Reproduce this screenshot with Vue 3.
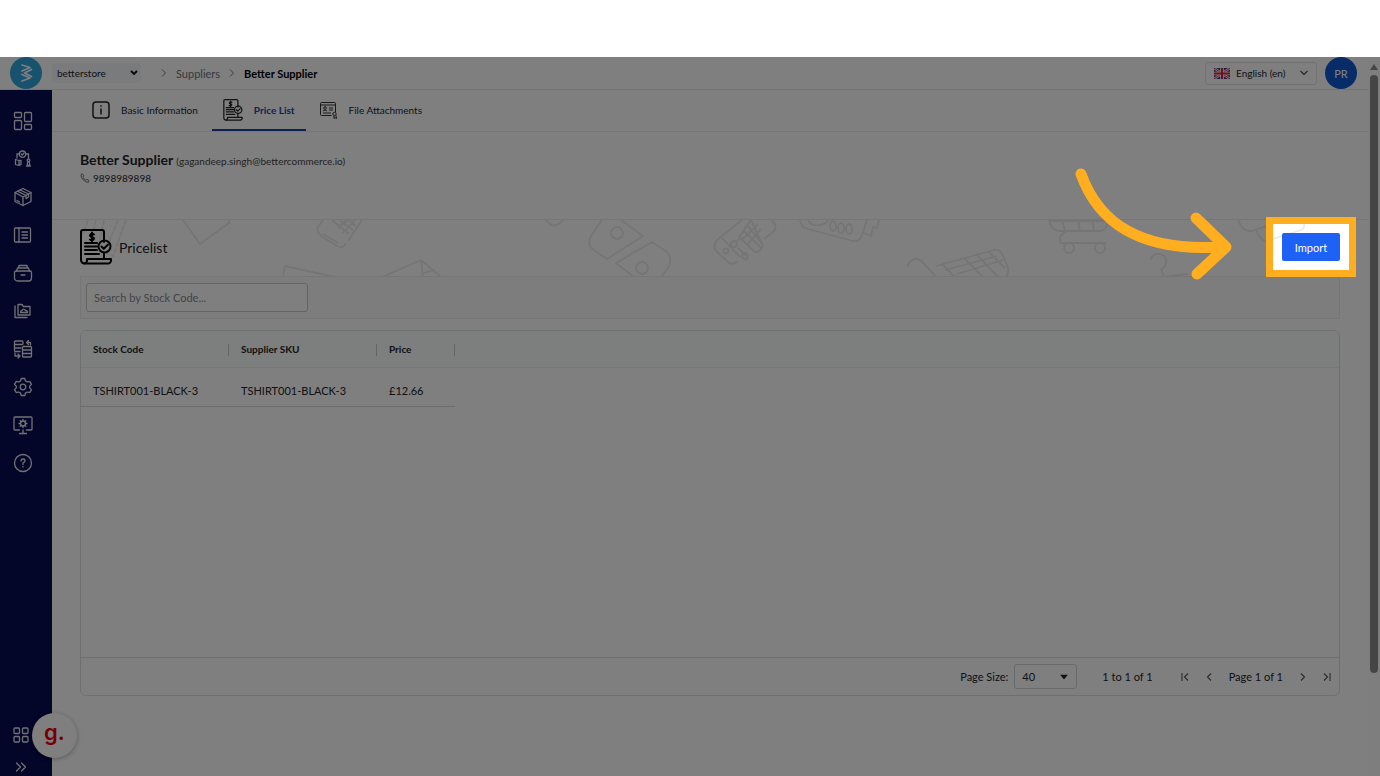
<template>
  <div class="page">
    <div class="stage">
      <div class="app">
        <header class="topbar">
          <a href="#" class="logo" aria-label="Home">
            <svg width="32" height="32" viewBox="0 0 32 32">
              <circle cx="16" cy="16" r="16" fill="#2ea6dc" />
              <g fill="none" stroke="#fff" stroke-width="1.7" stroke-linejoin="round" stroke-linecap="round">
                <path d="M12 8l8 2.500-8 3.500" />
                <path d="M21.500 12.500l-7 3.500 7 3.500" />
                <path d="M12 17.500l8 3.500-8 3" />
              </g>
            </svg>
          </a>
          <div class="store">
            <select v-model="store" aria-label="Store">
              <option>betterstore</option>
            </select>
            <svg class="caret" width="8" height="6" viewBox="0 0 8 6"><path d="M1 1l3 3 3-3" fill="none" stroke="#000" stroke-width="1.8" /></svg>
          </div>
          <nav class="crumbs">
            <svg width="6" height="8" viewBox="0 0 6 8"><path d="M1 .5L4.5 4 1 7.5" /></svg>
            <a href="#">Suppliers</a>
            <svg width="6" height="8" viewBox="0 0 6 8"><path d="M1 .5L4.5 4 1 7.5" /></svg>
            <strong>Better Supplier</strong>
          </nav>
          <div class="lang">
            <svg class="flag" width="16" height="11" viewBox="0 0 16 11">
              <rect width="16" height="11" fill="#2b3f9b" />
              <path d="M0 0l16 11M16 0L0 11" stroke="#fff" stroke-width="2.4" />
              <path d="M0 0l16 11M16 0L0 11" stroke="#e0203a" stroke-width="1" />
              <path d="M8 0v11M0 5.5h16" stroke="#fff" stroke-width="3.6" />
              <path d="M8 0v11M0 5.5h16" stroke="#e0203a" stroke-width="2" />
            </svg>
            <select v-model="lang" aria-label="Language">
              <option>English (en)</option>
            </select>
            <svg class="caret" width="8" height="6" viewBox="0 0 8 6"><path d="M.5 1L4 4.5 7.5 1" fill="none" stroke="#444" stroke-width="1.1" /></svg>
          </div>
          <button class="avatar">PR</button>
        </header>

        <div class="body">
          <aside class="sidebar">
            <button v-for="item in menu" :key="item.name" class="side-btn" :aria-label="item.name">
              <svg width="20" height="20" viewBox="0 0 20 20"><path v-for="d in item.paths" :key="d" :d="d" /></svg>
            </button>
            <div class="side-bottom">
              <button class="side-btn apps" aria-label="Apps">
                <svg width="20" height="20" viewBox="0 0 20 20"><path d="M4 3h3.500a1 1 0 0 1 1 1v3.500a1 1 0 0 1-1 1H4a1 1 0 0 1-1-1V4a1 1 0 0 1 1-1zM12.500 3H16a1 1 0 0 1 1 1v3.500a1 1 0 0 1-1 1h-3.500a1 1 0 0 1-1-1V4a1 1 0 0 1 1-1zM4 11.500h3.500a1 1 0 0 1 1 1V16a1 1 0 0 1-1 1H4a1 1 0 0 1-1-1v-3.500a1 1 0 0 1 1-1zM12.500 11.500H16a1 1 0 0 1 1 1V16a1 1 0 0 1-1 1h-3.500a1 1 0 0 1-1-1v-3.500a1 1 0 0 1 1-1z" /></svg>
              </button>
              <button class="side-btn expand" aria-label="Expand">
                <svg width="20" height="20" viewBox="0 0 20 20"><path d="M5.500 6l4 4-4 4M10.500 6l4 4-4 4" /></svg>
              </button>
            </div>
            <button class="guide">g.</button>
          </aside>

          <main class="content">
            <nav class="tabs">
              <a href="#" class="tab">
                <svg width="18" height="18" viewBox="0 0 18 18" fill="none" stroke="#222" stroke-width="1.500">
                  <rect x="1" y="1" width="16" height="16" rx="3" />
                  <path d="M9 7.500v6M9 4.300v1.500" />
                </svg>
                Basic Information
              </a>
              <a href="#" class="tab active">
                <svg width="20" height="22" viewBox="0 0 32 36" class="doc"><path v-for="d in priceIcon" :key="d" :d="d" /></svg>
                Price List
              </a>
              <a href="#" class="tab">
                <svg width="18" height="18" viewBox="0 0 18 18" fill="none" stroke="#333" stroke-width="1">
                  <path d="M11.500 14.500h-10a1 1 0 0 1-1-1v-11a1 1 0 0 1 1-1h13a1 1 0 0 1 1 1v8.500M.500 4h15M9 7h4M9 9h4M3 12h8" />
                  <circle cx="5" cy="7" r="1.300" /><path d="M3 10q2-2 4 0" />
                  <circle cx="14.500" cy="13" r="1.700" /><path d="M14 15v2.500l1.200-.8 1.300.8-.5-3" />
                </svg>
                File Attachments
              </a>
            </nav>

            <section class="supplier">
              <h1>Better Supplier <small>(gagandeep.singh@bettercommerce.io)</small></h1>
              <p class="phone">
                <svg width="10" height="10" viewBox="0 0 10 10" fill="none" stroke="#666" stroke-width=".9"><path d="M1 1.500L2.300.8l1.500 2-1 1.200q.8 2 3 3.200l1.200-1 2.100 1.500-.7 1.500Q6 9.800 3.300 7 .5 4.300 1 1.500z" /></svg>
                9898989898
              </p>
            </section>

            <section class="pricelist">
              <div class="band">
                <svg class="pattern" width="1260" height="56" viewBox="0 0 1260 56">
                  <g fill="none" stroke="#eaeaea" stroke-width="1.800" stroke-linejoin="round">
                    <path d="M8 0l-5 14M16 0l-4 16M24 0l-4 20M38 0L27 26M46 0L33 36l-8-3" stroke-dasharray="5 1" />
                    <path d="M103 0l17 24 29-21V0" />
                    <path d="M243 0l-5 7q-2 4 3 9l16 10q7 3 9-3M282 0l-14 21M252 0l17 14M260 0l13 10M268 0l8 6M258 8l9-8M263 13l12-13M243 14l15 9" />
                    <path d="M203 57l2-11 50 11M302 57l39-17 20 17M341 40l2 17M343 53l12-3" />
                    <path d="M466 0q8 11 17 0" />
                    <path d="M522 0l-11 16q-5 9 4 15l12 8 36-23L541 0" /><circle cx="537" cy="13" r="6" />
                    <path d="M554 57l-18-14 36-21 15 10q7 8-1 19l-5 6" /><circle cx="562" cy="48" r="6" />
                    <path d="M662 0l-25 20q-5 6 0 12l11 10q5 4 10-1M642 18l18 19M691 0q8 6 2 12l-9 7M659 17l12-17M659 17l16 15q4 1 8-6L671 0M664 11l17 17M668 6l15 19M662 20l16-16M667 25l14-16M654 22l11-5M658 28l8 8" />
                    <circle cx="646" cy="31" r="2.500" /><circle cx="654" cy="24" r="3" /><circle cx="665" cy="36" r="3" />
                    <path d="M720 0q1 8 8 9l45 12q7 1 9-6l5-15M728 0q4 7 12 5 6-1 8-5M783 13l8 3 2-9 4 1 2-8" />
                    <ellipse cx="753" cy="6" rx="3" ry="5" /><ellipse cx="761" cy="8" rx="3" ry="5" /><ellipse cx="769" cy="9" rx="3" ry="5" />
                    <path d="M827 47q3-8 9-8 5 0 10 7l10 11M856 46l58-16q6-1 8 4l5 11q3 6-1 12M862 44l13 13M884 38l19 19M896 34l22 23M908 31l17 17M877 54l46-14M865 50l52-14" />
                    <path d="M969 0q2 11 11 11h40q7 0 8-11M969 1h59M982 0l3 11M998 0l2 11M1012 0l2 11M986 11q-9 6-5 12h45" /><circle cx="989" cy="28" r="5" /><circle cx="1020" cy="28" r="5" />
                    <path d="M1071 39q2-6 9-5 7 2 6 9-1 5-5 6l3 8M1082 57l26-3" />
                    <path d="M1158 0q5 13 14 11l26-9M1176 10q4 9 9 11M1190 20l31-10q4-2 3-6" />
                  </g>
                </svg>
                <svg width="32" height="36" viewBox="0 0 32 36" class="doc"><path v-for="d in priceIcon" :key="d" :d="d" /></svg>
                <h2>Pricelist</h2>
                <div class="import-wrap">
                  <button class="import">Import</button>
                  <div class="spotlight"></div>
                  <svg class="arrow" width="158" height="114" viewBox="0 0 158 114">
                    <path d="M7 7C25 57 67 85 147 80M122 51l30 29-29 27" />
                  </svg>
                </div>
              </div>

              <div class="filter">
                <input type="text" v-model="search" placeholder="Search by Stock Code..." aria-label="Search by Stock Code" />
              </div>

              <div class="grid">
                <div class="grid-body">
                  <table>
                    <thead>
                      <tr>
                        <th class="wide">Stock Code</th>
                        <th class="wide">Supplier SKU</th>
                        <th class="narrow">Price</th>
                        <td></td>
                      </tr>
                    </thead>
                    <tbody>
                      <tr v-for="row in rows" :key="row.code">
                        <td>{{ row.code }}</td>
                        <td>{{ row.sku }}</td>
                        <td>{{ row.price }}</td>
                        <td></td>
                      </tr>
                    </tbody>
                  </table>
                </div>
                <footer class="paging">
                  <label for="page-size">Page Size:</label>
                  <div class="size">
                    <select id="page-size" v-model="pageSize">
                      <option>40</option>
                    </select>
                    <svg class="caret" width="8" height="5" viewBox="0 0 8 5"><path d="M0 0h8L4 5z" fill="#222" /></svg>
                  </div>
                  <span class="summary">1 to 1 of 1</span>
                  <div class="pager">
                    <button aria-label="First page"><svg width="8" height="8" viewBox="0 0 8 8"><path d="M1 0v8M7 .5L3.500 4 7 7.500" /></svg></button>
                    <button aria-label="Previous page"><svg width="8" height="8" viewBox="0 0 8 8"><path d="M6 .5L2.500 4 6 7.500" /></svg></button>
                    <span>Page 1 of 1</span>
                    <button aria-label="Next page"><svg width="8" height="8" viewBox="0 0 8 8"><path d="M2 .5L5.500 4 2 7.500" /></svg></button>
                    <button aria-label="Last page"><svg width="8" height="8" viewBox="0 0 8 8"><path d="M7 0v8M1 .5L4.500 4 1 7.500" /></svg></button>
                  </div>
                </footer>
              </div>
            </section>
          </main>
        </div>
      </div>

      <div class="scrollbar">
        <svg width="8" height="6" viewBox="0 0 8 6"><path d="M4 0l4 6H0z" fill="#8b8b8b" /></svg>
        <div class="thumb"></div>
      </div>
    </div>
  </div>
</template>

<script setup>
import { ref } from 'vue';

const store = ref('betterstore');
const lang = ref('English (en)');
const search = ref('');
const pageSize = ref('40');

const rows = [
  { code: 'TSHIRT001-BLACK-3', sku: 'TSHIRT001-BLACK-3', price: '£12.66' },
];

const priceIcon = [
  'M24 13V3a2 2 0 0 0-2-2H3a2 2 0 0 0-2 2v28a3.500 3.500 0 0 0 3.500 3.500',
  'M24 24v6',
  'M4.500 34.500A3 3 0 0 0 7 32v-2h24v1.500a3 3 0 0 1-3 3z',
  'M14 5.500q-2-1.500-3.500 0t1.500 2.500 1.500 2.500-3.500 0M12 3.500v9',
  'M5 14h12M5 17.500h12M5 21h12M5 25h14',
  'M24.500 11.500a6 6 0 1 1 0 12 6 6 0 0 1 0-12z',
  'M21.500 17.500l2.300 2.300 4-4',
];

// sidebar menu, top to bottom
const menu = [
  { name: 'Dashboard', paths: ['M2.500 1.500h5a1 1 0 0 1 1 1v3a1 1 0 0 1-1 1h-5a1 1 0 0 1-1-1v-3a1 1 0 0 1 1-1z', 'M12.500 1.500h5a1 1 0 0 1 1 1v7a1 1 0 0 1-1 1h-5a1 1 0 0 1-1-1v-7a1 1 0 0 1 1-1z', 'M2.500 9.500h5a1 1 0 0 1 1 1v7a1 1 0 0 1-1 1h-5a1 1 0 0 1-1-1v-7a1 1 0 0 1 1-1z', 'M12.500 13.500h5a1 1 0 0 1 1 1v3a1 1 0 0 1-1 1h-5a1 1 0 0 1-1-1v-3a1 1 0 0 1 1-1z'] },
  { name: 'Commerce', paths: ['M9.500 2a3.200 3.200 0 1 1 0 6.400 3.200 3.200 0 0 1 0-6.400z', 'M8.200 5l1 1 1.800-2', 'M6 5H4v4M13 5h2.500v4', 'M2.500 10.500l3.500 1v5l-3.500-1zM6 11.500h2v4L6 16.500', 'M15.500 10a1.300 1.300 0 1 1 0 2.600 1.300 1.300 0 0 1 0-2.600z', 'M14.700 12.600l-.5 3.900h2.600l-.5-3.900M13.500 17h4'] },
  { name: 'Catalog', paths: ['M10 1.500l8 4v9L10 18.500l-8-4v-9z', 'M2 5.500L10 10l8-4.500M10 10v8.500', 'M4.500 4.200l8.500 4.300v3l2.500-1.500V7L7 3', 'M4 13.500l2.500 1.300'] },
  { name: 'Content', paths: ['M2.500 3h14a1 1 0 0 1 1 1v12a1 1 0 0 1-1 1h-14a1 1 0 0 1-1-1V4a1 1 0 0 1 1-1z', 'M6 3v14M9 7h5.500M9 10h5.500M9 13h5.500'] },
  { name: 'Archive', paths: ['M3.500 8l1-3h11l1 3M5.500 5l.5-2.500h8l.5 2.500', 'M3 8h14a1.500 1.500 0 0 1 1.500 1.500V15a3 3 0 0 1-3 3h-11a3 3 0 0 1-3-3V9.500A1.500 1.500 0 0 1 3 8z', 'M8 12h4'] },
  { name: 'Media', paths: ['M5 3.500h4l1.500 2H17V14H5z', 'M2 5v11.500h12', 'M7.500 11.500q0-2 1.500-2 1-2 2.500-1t1 1q2 0 2 2z'] },
  { name: 'Data', paths: ['M9 2H2.500a1 1 0 0 0-1 1v1.500a1 1 0 0 0 1 1H9a1 1 0 0 0 1-1V3a1 1 0 0 0-1-1z', 'M8 9H2.500a1 1 0 0 1-1-1V5.500M7 12.500H2.500a1 1 0 0 1-1-1V8', 'M10.500 7.500h7a1 1 0 0 1 1 1V17a1 1 0 0 1-1 1h-7a1 1 0 0 1-1-1V8.500a1 1 0 0 1 1-1zM10 11h8M10 14.500h8', 'M14 3.500h3.500V6M15.500 1.500l-2 2 2 2', 'M2 14v3h4.500M5 15l2 2-2 2'] },
  { name: 'Settings', paths: ['M8.200 1.500h3.600l.6 2.400 1.900 1.100 2.400-.7 1.800 3.100-1.800 1.700v1.800l1.800 1.700-1.800 3.100-2.400-.7-1.900 1.100-.6 2.400H8.200l-.6-2.400L5.700 15l-2.400.7-1.800-3.100 1.800-1.700V9.100L1.500 7.400l1.800-3.100 2.400.7 1.900-1.100z', 'M10 7.200a2.800 2.800 0 1 1 0 5.600 2.800 2.800 0 0 1 0-5.600z'] },
  { name: 'Monitor', paths: ['M6.500 15H2a1 1 0 0 1-1-1V3a1 1 0 0 1 1-1h16a1 1 0 0 1 1 1v11a1 1 0 0 1-1 1h-4.500', 'M10 15v3.500M6.500 18.500h7', 'M10 6a2.500 2.500 0 1 1 0 5 2.500 2.500 0 0 1 0-5z', 'M10 4.500V6M10 11v1.500M6 8.500h1.500M12.500 8.500H14M7.200 5.700l1 1M12.800 5.700l-1 1M7.200 11.300l1-1M12.800 11.300l-1-1'] },
  { name: 'Help', paths: ['M10 1.500a8.500 8.500 0 1 1 0 17 8.500 8.500 0 0 1 0-17z', 'M8 8q0-2 2-2t2 1.800q0 1.200-2 2.200v1.500M10 13.500v.5'] },
];
</script>

<style>
body { background: #ffffff; }
</style>

<style scoped>
.page { padding-top: 57px; height: 100vh; box-sizing: border-box; font-family: Lato, "Liberation Sans", sans-serif; font-size: 11px; color: #212529; }
.page *, .page *::before { box-sizing: border-box; }
.page select, .page input, .page button { font-family: inherit; font-size: 11px; color: inherit; margin: 0; }
button { background: none; border: none; padding: 0; cursor: pointer; }
a { color: inherit; text-decoration: none; }
select { appearance: none; border: none; background: transparent; outline: none; width: 100%; height: 100%; }
h1, h2, p { margin: 0; }
.caret { position: absolute; right: 8px; top: 50%; transform: translateY(-50%); pointer-events: none; }

.stage { position: relative; display: flex; height: 100%; overflow: hidden; background: #ffffff; }
.app { flex: 1; min-width: 0; display: flex; flex-direction: column; }

/* top bar */
.topbar { display: flex; align-items: center; height: 33px; padding: 0 11px 0 10px; border-bottom: 1px solid #e9e9e9; flex-shrink: 0; }
.logo { display: block; height: 32px; margin-right: 10px; }
.store { position: relative; width: 89px; height: 20px; background: #f5f6f9; border-radius: 4px; }
.page .store select, .page .lang select { font-size: 10px; }
.store select { padding: 0 20px 0 5px; }
.store .caret { right: 3px; }
.crumbs { display: flex; align-items: center; gap: 9px; margin-left: 20px; margin-right: auto; color: #6b7280; }
.crumbs svg { fill: none; stroke: #777; stroke-width: 1; }
.crumbs strong { color: #000; }
.lang { position: relative; width: 112px; height: 23px; border: 1px solid #e3e3e3; border-radius: 3px; margin-right: 8px; }
.lang select { padding: 0 20px 0 30px; }
.flag { position: absolute; left: 8px; top: 5px; pointer-events: none; }
.page .avatar { width: 32px; height: 32px; border-radius: 50%; background: #1159cf; color: #ffffff; }

.body { flex: 1; display: flex; min-height: 0; }

/* sidebar */
.sidebar { position: relative; display: flex; flex-direction: column; width: 52px; padding-top: 12px; background: #060a52; flex-shrink: 0; }
.side-btn { display: flex; align-items: center; justify-content: center; width: 46px; height: 38px; flex-shrink: 0; }
.side-btn svg { fill: none; stroke: #e4e4ea; stroke-width: 1.3; stroke-linecap: round; stroke-linejoin: round; }
.side-bottom { display: flex; flex-direction: column; gap: 7px; margin-top: auto; }
.side-bottom .side-btn { width: 42px; height: 32px; }
.side-bottom .expand { height: 18px; }
.page .guide { position: absolute; left: 32px; bottom: 18px; width: 45px; height: 45px; border-radius: 50%; background: #ffffff; color: #e8000b; font-family: Inter, sans-serif; font-size: 22px; font-weight: 600; line-height: 24px; padding-bottom: 8px; box-shadow: 0 1px 5px rgba(0, 0, 0, 0.3); z-index: 10; }

/* content */
.content { flex: 1; min-width: 0; }
.tabs { display: flex; gap: 3px; height: 42px; padding-left: 29px; border-bottom: 1px solid #ececec; font-size: 10px; }
.tab { display: flex; align-items: center; gap: 11px; padding: 0 11px; border-bottom: 2px solid transparent; }
.tab.active { color: #1d3fa6; border-bottom-color: #1d3fa6; font-weight: 700; }
.doc { fill: none; stroke: #000; stroke-width: 2; stroke-linejoin: round; stroke-linecap: round; }
.tab .doc { stroke: #222; }
.supplier { height: 87px; padding: 18px 28px 0; }
.supplier h1 { font-size: 14px; line-height: 20px; font-weight: 700; }
.supplier small { font-size: 10px; font-weight: 400; color: #444; }
.phone { display: flex; align-items: center; gap: 3px; font-size: 10px; line-height: 14px; }

.pricelist { padding: 0 28px; border-top: 1px solid #ececec; }
.band { position: relative; display: flex; align-items: center; gap: 7px; height: 56px; padding-bottom: 2px; }
.band > .doc, .band > h2 { position: relative; }
.pattern { position: absolute; left: 0; top: 0; }
.band h2 { font-size: 14px; font-weight: 400; }
.import-wrap { position: relative; margin-left: auto; }
.page .import { display: block; width: 58px; height: 28px; border-radius: 2px; background: #1e62f5; color: #ffffff; }
/* everything outside the frame is dimmed */
.spotlight { position: absolute; inset: -16px; border: 7px solid #ffae1f; box-shadow: 0 0 0 3000px rgba(0, 0, 0, 0.5); z-index: 50; pointer-events: none; }
.arrow { position: absolute; right: 108px; top: -66px; z-index: 51; pointer-events: none; fill: none; stroke: #ffae1f; stroke-width: 11; stroke-linecap: round; stroke-linejoin: round; }

.filter { padding: 6px 5px; border: 1px solid #ececec; background: #fbfbfb; }
.filter input { display: block; width: 222px; height: 29px; padding: 0 7px; border: 1px solid #c9c9c9; border-radius: 3px; background: #ffffff; outline: none; }
.filter input::placeholder { color: #85888d; }

.grid { margin-top: 11px; border: 1px solid #dcdfe2; border-radius: 6px; overflow: hidden; }
.grid-body { height: 326px; }
table { width: 100%; border-collapse: separate; border-spacing: 0; table-layout: fixed; }
thead tr { height: 37px; background: #fbfcfc; }
th, td { padding: 0 12px; text-align: left; }
th { position: relative; font-size: 10px; font-weight: 700; }
th::before { content: ""; position: absolute; right: 0; top: 13px; width: 1px; height: 12px; background: #c5c8cb; }
thead th, thead td { border-bottom: 1px solid #eceeef; }
.wide { width: 148px; }
.narrow { width: 78px; }
tbody tr { height: 39px; }
tbody td { padding-top: 6px; border-bottom: 1px solid #d5d8da; }
tbody td:last-child { border-bottom: none; }

.paging { display: flex; align-items: center; justify-content: flex-end; height: 38px; padding: 0 8px; border-top: 1px solid #dcdfe2; }
.size { position: relative; width: 63px; height: 25px; margin-left: 6px; border: 1px solid #cfd2d5; border-radius: 3px; }
.size select { padding: 0 20px 0 7px; }
.summary { margin-left: 25px; }
.pager { display: flex; align-items: center; gap: 16px; margin-left: 28px; }
.pager button { display: flex; }
.pager svg { fill: none; stroke: #555; stroke-width: 1.1; }

.scrollbar { display: flex; flex-direction: column; align-items: center; gap: 5px; width: 12px; padding-top: 7px; background: #fcfcfc; }
.thumb { width: 8px; height: 84%; border-radius: 4px; background: #8b8b8b; }
</style>
